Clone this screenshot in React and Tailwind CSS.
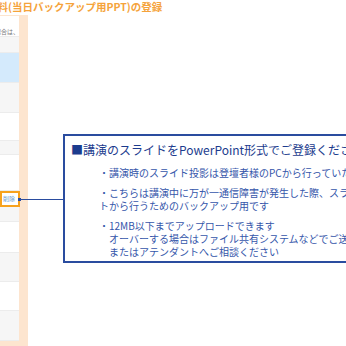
const rows = [
  { h: "h-[21px]", bg: "bg-white", text: "アップロードの場合は、" },
  { h: "h-[16px]", bg: "bg-[#f6f6f6]" },
  { h: "h-[30px]", bg: "bg-[#d4eafc]" },
  { h: "h-[30px]", bg: "bg-[#f6f6f6]" },
  { h: "h-[28px]", bg: "bg-white" },
  { h: "h-[14px]", bg: "bg-[#f6f6f6]" },
  { h: "h-[36px]", bg: "bg-white" },
  { h: "h-[16px]", bg: "bg-white", button: true },
  { h: "h-[15px]", bg: "bg-[#f6f6f6]" },
  { h: "h-[31px]", bg: "bg-white" },
  { h: "h-[29px]", bg: "bg-[#f6f6f6]" },
  { h: "h-[29px]", bg: "bg-white" },
  { h: "h-[30px]", bg: "bg-[#f6f6f6]" },
];

const notes = [
  ["・講演時のスライド投影は登壇者様のPCから行っていただきます"],
  ["・こちらは講演中に万が一通信障害が発生した際、スライ", "トから行うためのバックアップ用です"],
  ["・12MB以下までアップロードできます", "\u3000オーバーする場合はファイル共有システムなどでご送付いただくか", "\u3000またはアテンダントへご相談ください"],
];

export default function App() {
  return (
    <div className="w-[346px] h-[346px] overflow-hidden bg-white font-['Noto_Sans_CJK_JP','Noto_Sans',sans-serif]">
      <div className="h-[15px] flex items-center ml-[-13px] whitespace-nowrap text-[10.5px] font-bold text-[#f5a33b] leading-none">
        資料(当日バックアップ用PPT)の登録
      </div>

      <div className="relative flex">
        <div className="w-[28px] shrink-0 bg-[#fde5cf] pt-px pr-[9px] pb-[5px]">
          <div className="bg-white flex flex-col">
            {rows.map((r, i) =>
              r.button ? (
                <div key={i} className={`${r.h} mr-[-1px] border-2 border-[#f7a21e] bg-white flex items-center justify-end pr-[3px] overflow-hidden`}>
                  <span className="text-[6px] text-[#6d9fd6] whitespace-nowrap leading-none">削除</span>
                </div>
              ) : (
                <div key={i} className={`${r.h} ${r.bg} border-b border-[#ececec] flex items-end justify-end overflow-hidden pb-px`}>
                  {r.text && (
                    <span className="text-[6px] text-[#777] whitespace-nowrap leading-none">{r.text}</span>
                  )}
                </div>
              )
            )}
          </div>
        </div>

        <div className="pl-[35px] pt-[119px]">
          <div className="w-[330px] border-2 border-[#2a4c9f] bg-white pl-[6px] pt-[6px] pb-[3px]">
            <div className="h-[16px] flex items-center whitespace-nowrap text-[12px] text-[#1c3c8e] leading-none">
              <span>■</span>講演のスライドをPowerPoint形式でご登録ください
            </div>
            <div className="pl-[28px] mt-[8px] flex flex-col gap-[7px] text-[10px] leading-[13px] text-[#3556aa]">
              {notes.map((p, i) => (
                <div key={i} className="flex flex-col">
                  {p.map((l, j) => (
                    <div key={j} className="whitespace-nowrap">{l}</div>
                  ))}
                </div>
              ))}
            </div>
          </div>
        </div>

        <div className="absolute left-[18px] top-[183px] w-[3px] h-[3px] bg-[#2a4c9f]" />
        <div className="absolute left-[20px] top-[184px] w-[44px] h-px bg-[#2a4c9f]" />
      </div>
    </div>
  );
}
